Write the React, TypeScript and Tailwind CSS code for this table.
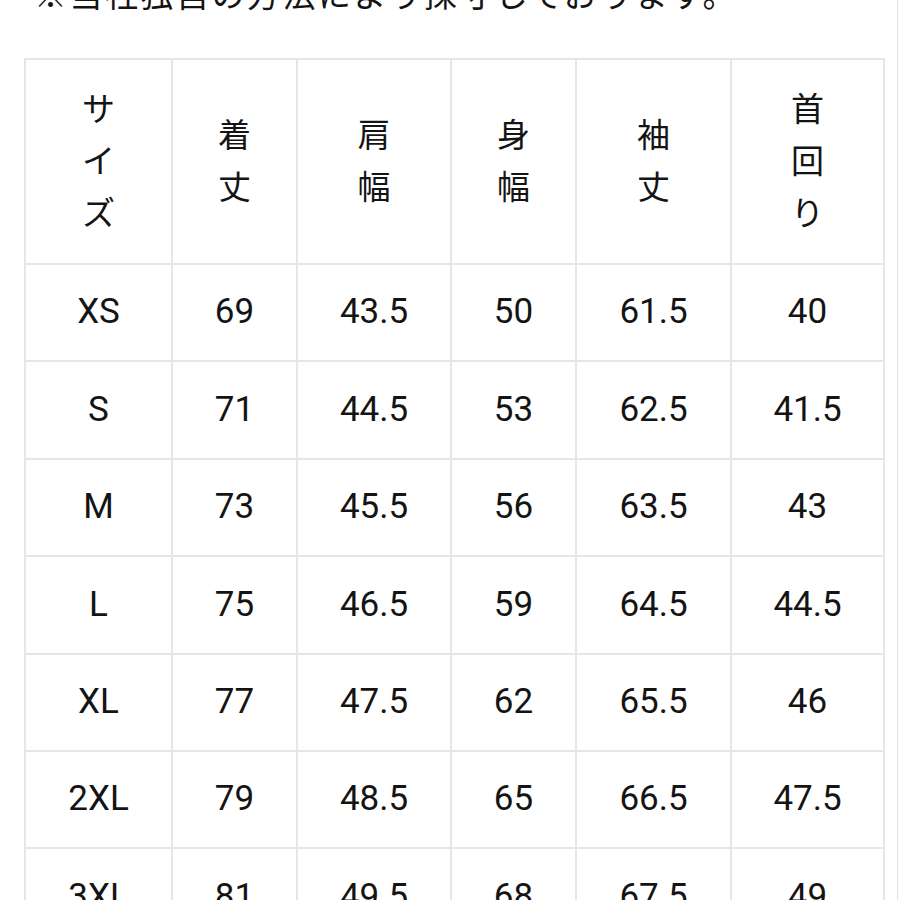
const headers = [["サ", "イ", "ズ"], ["着", "丈"], ["肩", "幅"], ["身", "幅"], ["袖", "丈"], ["首", "回", "り"]];

const rows = [
  ["XS", "69", "43.5", "50", "61.5", "40"],
  ["S", "71", "44.5", "53", "62.5", "41.5"],
  ["M", "73", "45.5", "56", "63.5", "43"],
  ["L", "75", "46.5", "59", "64.5", "44.5"],
  ["XL", "77", "47.5", "62", "65.5", "46"],
  ["2XL", "79", "48.5", "65", "66.5", "47.5"],
  ["3XL", "81", "49.5", "68", "67.5", "49"],
];

export default function App() {
  return (
    <div
      className="relative h-[900px] w-[900px] overflow-hidden bg-white text-[#141414]"
      style={{ fontFamily: 'Roboto, "Noto Sans CJK JP", sans-serif' }}
    >
      <div className="absolute right-[2px] top-0 h-full w-px bg-[#e2e2e2]" />
      <p className="-mt-[21px] pl-[34px] text-[33px] leading-[34px] tracking-[2.5px] whitespace-nowrap">
        ※当社独自の方法により採寸しております。
      </p>
      <div className="ml-[24px] mt-[45px] grid w-[861px] grid-cols-[145px_123px_152px_123px_153px_151px] gap-[2px] bg-[#e6e6e6] p-[2px]">
        {headers.map((h, i) => (
          <div key={i} className="flex h-[203px] flex-col items-center justify-center bg-white text-[33px] leading-[52px]">
            {h.map((c, j) => (
              <span key={j}>{c}</span>
            ))}
          </div>
        ))}
        {rows.map((r, i) =>
          r.map((v, j) => (
            <div key={`${i}-${j}`} className="flex h-[95.4px] items-center justify-center bg-white text-[35px]">
              {v}
            </div>
          ))
        )}
      </div>
    </div>
  );
}
